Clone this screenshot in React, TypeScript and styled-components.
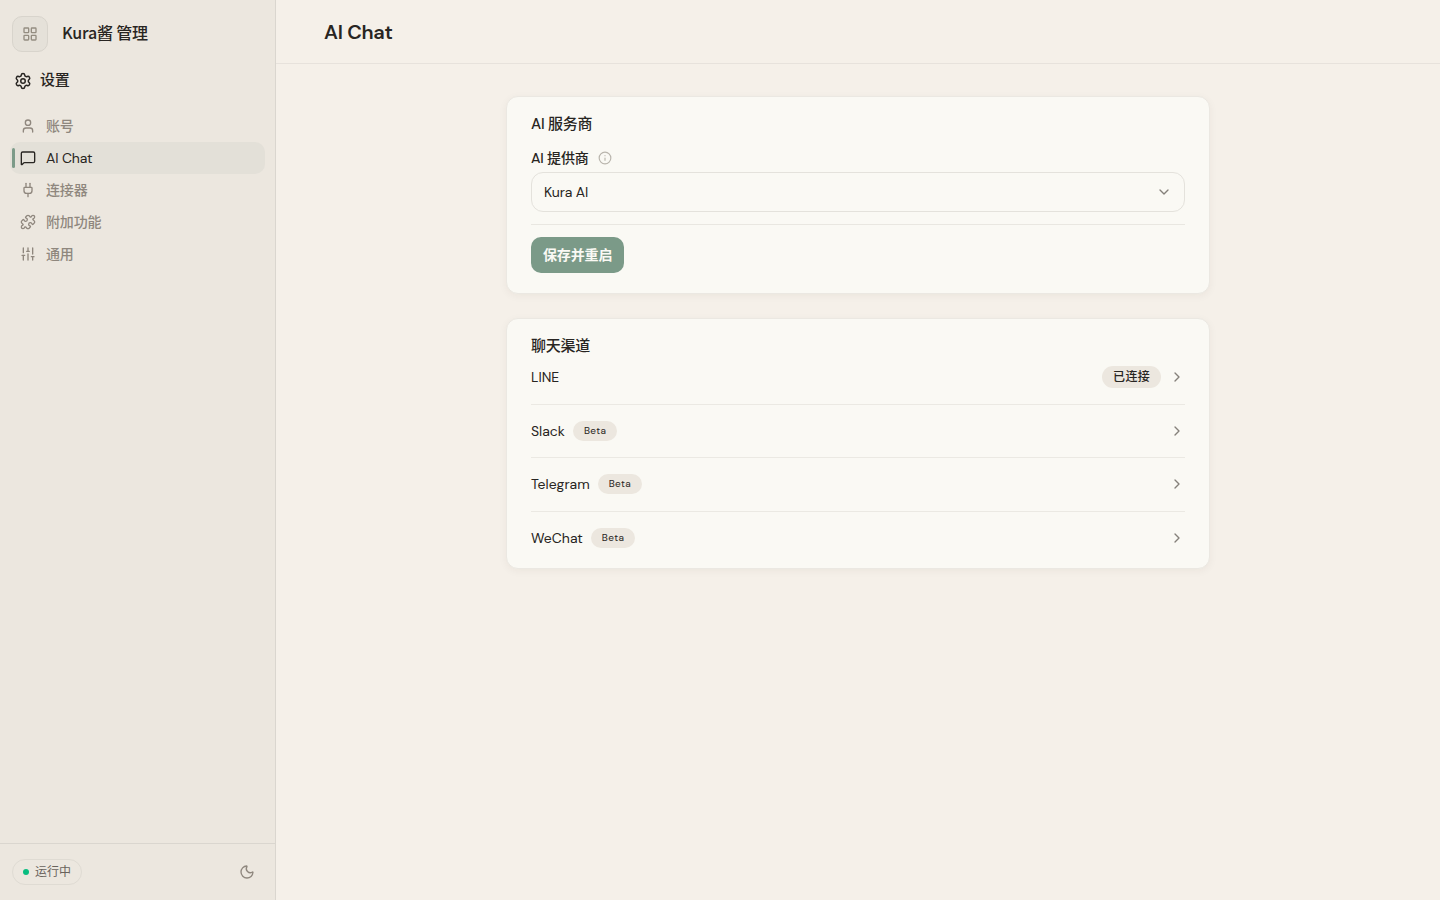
import React from 'react';
import styled, { createGlobalStyle } from 'styled-components';
import {
  ChevronDown, ChevronRight, Info, LayoutGrid, MessageSquare, Moon, Plug, Puzzle, Settings, SlidersVertical, User,
} from 'lucide-react';

const GlobalStyle = createGlobalStyle`
  *, *::before, *::after { box-sizing: border-box; }
  body {
    margin: 0;
    background: #f5f0e9;
    color: #282522;
    font-family: 'DM Sans', 'Noto Sans CJK SC', Inter, sans-serif;
    font-size: 14px;
    line-height: 20px;
  }
  button { font: inherit; color: inherit; border: 0; background: none; padding: 0; text-align: left; }
  h1, h2 { margin: 0; }
  svg { display: block; flex: none; }
`;

const Shell = styled.div`
  display: flex;
  height: 100vh;
`;

const Sidebar = styled.aside`
  display: flex;
  flex-direction: column;
  flex: none;
  width: 276px;
  background: #ece7df;
  border-right: 1px solid #dad6cf;
`;

const Brand = styled.div`
  display: flex;
  align-items: center;
  gap: 14px;
  padding: 16px 12px 0;
`;

const BrandMark = styled.div`
  display: grid;
  place-items: center;
  width: 36px;
  height: 36px;
  border: 1px solid #d8d4cc;
  border-radius: 10px;
  background: #e5e1d9;
  color: #948d81;
`;

const BrandName = styled.div`
  padding-bottom: 4px;
  font: 500 16px/24px 'Noto Sans CJK SC', sans-serif;
  letter-spacing: -0.01em;
`;

const SectionTitle = styled.div`
  display: flex;
  align-items: center;
  gap: 8px;
  height: 24px;
  margin: 17px 14px 0;
  font-size: 15px;
  font-weight: 500;
  letter-spacing: -0.01em;
`;

const SectionLabel = styled.span`
  padding-bottom: 2px;
`;

const Nav = styled.nav`
  display: flex;
  flex-direction: column;
  flex: 1;
  padding: 17px 10px 0;
`;

const NavItem = styled.button<{ $active?: boolean }>`
  position: relative;
  display: flex;
  align-items: center;
  gap: 10px;
  height: 32px;
  padding: 0 10px;
  border-radius: 10px;
  background: ${p => (p.$active ? '#e3e0d8' : 'transparent')};
  color: ${p => (p.$active ? '#282522' : '#8f877e')};
  font-weight: 450;
  letter-spacing: -0.01em;

  &::before {
    content: '';
    display: ${p => (p.$active ? 'block' : 'none')};
    position: absolute;
    left: 2px;
    top: 6px;
    width: 3px;
    height: 20px;
    border-radius: 2px;
    background: #7b9a88;
  }
`;

const SidebarFooter = styled.div`
  display: flex;
  align-items: center;
  justify-content: space-between;
  height: 57px;
  padding: 0 20px 0 12px;
  border-top: 1px solid #dad6cf;
  color: #8f877e;
`;

const Status = styled.div`
  display: flex;
  align-items: center;
  gap: 6px;
  height: 26px;
  padding: 0 10px;
  border: 1px solid #dfdbd3;
  border-radius: 13px;
  font-size: 12px;
  color: #69635c;
`;

const StatusDot = styled.span`
  width: 6px;
  height: 6px;
  border-radius: 50%;
  background: #08bd80;
`;

const Main = styled.main`
  flex: 1;
  min-width: 0;
`;

const Header = styled.header`
  display: flex;
  align-items: center;
  height: 64px;
  padding: 0 48px;
  border-bottom: 1px solid #e7e2dc;
`;

const PageTitle = styled.h1`
  font-size: 20px;
  line-height: 28px;
  font-weight: 570;
  letter-spacing: -0.014em;
`;

const Content = styled.div`
  display: flex;
  flex-direction: column;
  gap: 24px;
  width: 704px;
  margin: 32px auto 0;
`;

const Card = styled.section`
  padding: 16px 24px 20px;
  border: 1px solid #ebe8e2;
  border-radius: 12px;
  background: #faf9f4;
  box-shadow: 0 2px 8px rgba(60, 40, 20, 0.05);
`;

const CardTitle = styled.h2`
  font-size: 15px;
  line-height: 22px;
  font-weight: 500;
  letter-spacing: -0.016em;
`;

const FieldLabel = styled.div`
  display: flex;
  align-items: center;
  gap: 9px;
  margin: 13px 0 4px;
  font-weight: 500;
  letter-spacing: -0.01em;

  svg { color: #b9b5ad; }
`;

const Select = styled.button`
  display: flex;
  align-items: center;
  justify-content: space-between;
  width: 100%;
  height: 40px;
  padding: 0 12px;
  border: 1px solid #e4e2dc;
  border-radius: 12px;
  letter-spacing: -0.01em;

  svg { color: #85807a; }
`;

const Actions = styled.div`
  margin-top: 12px;
  padding-top: 12px;
  border-top: 1px solid #e9e7e1;
`;

const PrimaryButton = styled.button`
  display: block;
  height: 36px;
  padding: 0 12px;
  border-radius: 10px;
  background: #7b9a88;
  color: #faf9f4;
  font-weight: 600;
  letter-spacing: -0.01em;
`;

const ChannelList = styled.div`
  display: flex;
  flex-direction: column;
  margin-top: 9px;
`;

const ChannelRow = styled.div`
  display: flex;
  align-items: center;
  gap: 8px;
  height: 53.3px;
  border-bottom: 1px solid #ebe9e3;

  > svg { color: #85807a; }

  &:first-child { height: 39px; padding-bottom: 16px; }
  &:last-child { height: 36.5px; padding-top: 16px; border-bottom: 0; }
`;

const Spacer = styled.span`
  flex: 1;
`;

const Badge = styled.span<{ $small?: boolean }>`
  padding: 0 11px;
  border-radius: 11px;
  background: #ece7df;
  font-size: ${p => (p.$small ? 10 : 12)}px;
  line-height: ${p => (p.$small ? 20 : 22)}px;
  font-weight: 450;
  letter-spacing: ${p => (p.$small ? 0.04 : 0.025)}em;
`;

const navItems = [
  { label: '账号', Icon: User },
  { label: 'AI Chat', Icon: MessageSquare, active: true },
  { label: '连接器', Icon: Plug },
  { label: '附加功能', Icon: Puzzle },
  { label: '通用', Icon: SlidersVertical },
];

const channels = [
  { name: 'LINE', status: '已连接' },
  { name: 'Slack', beta: true },
  { name: 'Telegram', beta: true },
  { name: 'WeChat', beta: true },
];

export default function App() {
  return (
    <Shell>
      <GlobalStyle />
      <Sidebar>
        <Brand>
          <BrandMark><LayoutGrid size={16} /></BrandMark>
          <BrandName>Kura酱 管理</BrandName>
        </Brand>
        <SectionTitle><Settings size={18} /><SectionLabel>设置</SectionLabel></SectionTitle>
        <Nav>
          {navItems.map(({ label, Icon, active }) => (
            <NavItem key={label} $active={active}><Icon size={16} />{label}</NavItem>
          ))}
        </Nav>
        <SidebarFooter>
          <Status><StatusDot />运行中</Status>
          <Moon size={16} />
        </SidebarFooter>
      </Sidebar>
      <Main>
        <Header><PageTitle>AI Chat</PageTitle></Header>
        <Content>
          <Card>
            <CardTitle>AI 服务商</CardTitle>
            <FieldLabel>AI 提供商<Info size={14} /></FieldLabel>
            <Select>Kura AI<ChevronDown size={16} /></Select>
            <Actions><PrimaryButton>保存并重启</PrimaryButton></Actions>
          </Card>
          <Card>
            <CardTitle>聊天渠道</CardTitle>
            <ChannelList>
              {channels.map(({ name, status, beta }) => (
                <ChannelRow key={name}>
                  {name}
                  {beta && <Badge $small>Beta</Badge>}
                  <Spacer />
                  {status && <Badge>{status}</Badge>}
                  <ChevronRight size={16} />
                </ChannelRow>
              ))}
            </ChannelList>
          </Card>
        </Content>
      </Main>
    </Shell>
  );
}
